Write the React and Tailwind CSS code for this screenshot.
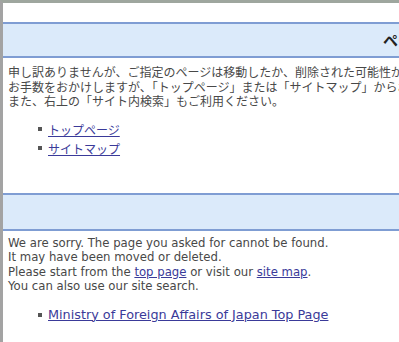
export default function App() {
  const jp = { fontFamily: '"Noto Sans CJK JP", "Noto Sans", sans-serif' };
  const en = { fontFamily: '"DejaVu Sans", "Noto Sans CJK JP", sans-serif' };
  return (
    <div className="w-[399px] h-[342px] overflow-hidden bg-white border-t-[3px] border-l-[3px] border-t-[#9ea69e] border-l-[#a3a3a3]">
      <div className="pt-[19px]">
        <div className="h-[36px] bg-[#dbeafa] border-t-[2px] border-b-[2px] border-[#7f9dd3] flex items-center overflow-hidden">
          <span className="pl-[380px] whitespace-nowrap text-[15px] font-bold text-[#222]" style={jp}>ページが見つかりません</span>
        </div>
        <div className="pl-[5px] pt-[7px] text-[12px] leading-[14.5px] text-[#484848] whitespace-nowrap" style={jp}>
          <p>申し訳ありませんが、ご指定のページは移動したか、削除された可能性があります。</p>
          <p>お手数をおかけしますが、「トップページ」または「サイトマップ」からお探しください。</p>
          <p>また、右上の「サイト内検索」もご利用ください。</p>
        </div>
        <ul className="pl-[35px] pt-[11px] text-[12px] leading-[19px]" style={jp}>
          <li className="flex items-center gap-[6px]">
            <span className="w-[4px] h-[4px] bg-[#555] inline-block"></span>
            <a href="#" className="underline text-[#3a3a99]">トップページ</a>
          </li>
          <li className="flex items-center gap-[6px]">
            <span className="w-[4px] h-[4px] bg-[#555] inline-block"></span>
            <a href="#" className="underline text-[#3a3a99]">サイトマップ</a>
          </li>
        </ul>
        <div className="mt-[35px] h-[38px] bg-[#dbeafa] border-t-[2px] border-b-[2px] border-[#7f9dd3]"></div>
        <div className="pl-[5px] pt-[5px] text-[11.7px] leading-[14.5px] text-[#484848] whitespace-nowrap" style={en}>
          <p>We are sorry. The page you asked for cannot be found.</p>
          <p>It may have been moved or deleted.</p>
          <p>Please start from the <a href="#" className="underline text-[#3a3a99]">top page</a> or visit our <a href="#" className="underline text-[#3a3a99]">site map</a>.</p>
          <p>You can also use our site search.</p>
        </div>
        <ul className="pl-[35px] pt-[13px] text-[12.8px] leading-[16px]" style={en}>
          <li className="flex items-center gap-[6px]">
            <span className="w-[4px] h-[4px] bg-[#555] inline-block"></span>
            <a href="#" className="underline text-[#3a3a99] whitespace-nowrap">Ministry of Foreign Affairs of Japan Top Page</a>
          </li>
        </ul>
      </div>
    </div>
  );
}
